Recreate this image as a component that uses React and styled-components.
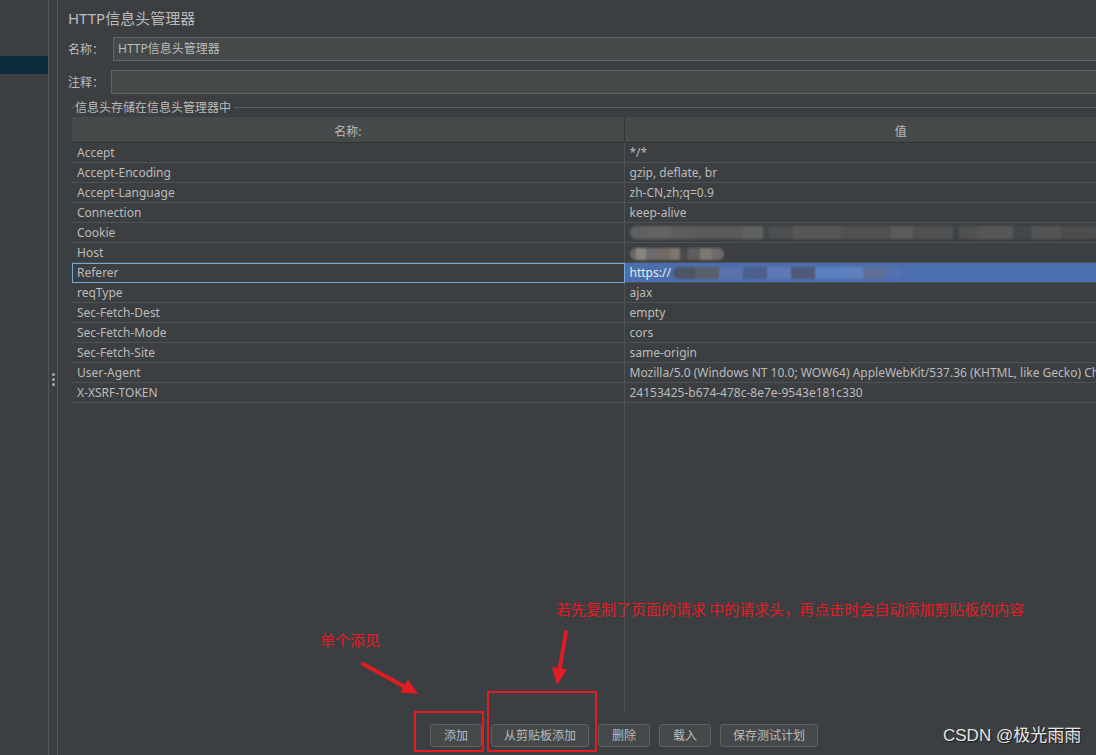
import styled, { createGlobalStyle } from 'styled-components';

const GlobalStyle = createGlobalStyle`
    html, body {
        margin: 0;
        padding: 0;
        background: #3c3f41;
        overflow: hidden;
    }
    body {
        font-family: "Noto Sans", "Noto Sans CJK SC", sans-serif;
        color: #bbbbbb;
    }
`;

const headers = [
    ['Accept', '*/*'],
    ['Accept-Encoding', 'gzip, deflate, br'],
    ['Accept-Language', 'zh-CN,zh;q=0.9'],
    ['Connection', 'keep-alive'],
    ['Cookie', null, 'cookie'],
    ['Host', null, 'host'],
    ['Referer', 'https://', 'referer'],
    ['reqType', 'ajax'],
    ['Sec-Fetch-Dest', 'empty'],
    ['Sec-Fetch-Mode', 'cors'],
    ['Sec-Fetch-Site', 'same-origin'],
    ['User-Agent', 'Mozilla/5.0 (Windows NT 10.0; WOW64) AppleWebKit/537.36 (KHTML, like Gecko) Chrome/86.0.4240.198 Safari/537.36'],
    ['X-XSRF-TOKEN', '24153425-b674-478c-8e7e-9543e181c330'],
];

// blurred blocks that hide the private values
const mosaics = {
    cookie: [
        [17, '#5d5f61'], [24, '#626364'], [24, '#5c5d5e'], [48, '#5a5a5b'], [20, '#606162'],
        [6, '#45484a'], [24, '#4c4e50'], [48, '#565758'], [50, '#4f5152'], [22, '#5a5b5c'],
        [40, '#4f5152'], [6, '#3e4143'], [18, '#4e5051'], [36, '#555657'], [18, '#44474a'],
        [30, '#545556'], [40, '#4b4d4f'],
    ],
    host: [
        [6, '#6a6a6a'], [10, '#8a8580'], [12, '#6b6a70'], [12, '#726a62'], [10, '#7b7670'],
        [8, '#4a4a4a'], [12, '#5f5d62'], [12, '#7d7872'], [12, '#6f6b6a'],
    ],
    referer: [
        [22, '#4d5464'], [24, '#5a5f6c'], [24, '#5a73ad'], [24, '#4b5f8f'], [24, '#5d78b5'],
        [24, '#4e5a78'], [24, '#5a7ec0'], [24, '#5e80bd'], [22, '#5f6f95'], [18, '#5472b0'],
    ],
};

function HeaderRow({ name, value, kind }) {
    const selected = kind === 'referer';
    return (
        <Row>
            <NameCell $selected={selected}>{name}</NameCell>
            <ValueCell $selected={selected}>
                {value && <span>{value}</span>}
                {kind && (
                    <Mosaic $kind={kind}>
                        {mosaics[kind].map(([w, c], i) => (
                            <Block key={i} $w={w} $c={c} />
                        ))}
                    </Mosaic>
                )}
            </ValueCell>
        </Row>
    );
}

export default function App() {
    return (
        <>
            <GlobalStyle />
            <Frame>
                <Sidebar>
                    <TreeItem />
                    <TreeItem $selected />
                </Sidebar>
                <Splitter>
                    <Grip>
                        <Dot />
                        <Dot />
                        <Dot />
                    </Grip>
                </Splitter>
                <Main>
                    <Title>HTTP信息头管理器</Title>
                    <FieldRow>
                        <Label>名称：</Label>
                        <TextInput>HTTP信息头管理器</TextInput>
                    </FieldRow>
                    <FieldRow>
                        <Label>注释：</Label>
                        <TextInput $tight />
                    </FieldRow>
                    <Group>
                        <Legend>信息头存储在信息头管理器中</Legend>
                        <Table>
                            <HeadRow>
                                <HeadCell>名称:</HeadCell>
                                <HeadCell>值</HeadCell>
                            </HeadRow>
                            {headers.map(([name, value, kind]) => (
                                <HeaderRow key={name} name={name} value={value} kind={kind} />
                            ))}
                            <Filler>
                                <FillCell />
                                <FillCell />
                            </Filler>
                        </Table>
                    </Group>
                    <ButtonBar>
                        <Button>添加</Button>
                        <Button>从剪贴板添加</Button>
                        <Button>删除</Button>
                        <Button>载入</Button>
                        <Button>保存测试计划</Button>
                    </ButtonBar>
                </Main>
            </Frame>

            <Note $x={320} $y={630}>单个添见</Note>
            <Note $x={556} $y={599}>若先复制了页面的请求 中的请求头，再点击时会自动添加剪贴板的内容</Note>
            <Marks width="1096" height="755" viewBox="0 0 1096 755">
                <g stroke="#e21c24" fill="none">
                    <line x1="363" y1="664" x2="405" y2="687" strokeWidth="4" strokeLinecap="round" />
                    <line x1="566" y1="632" x2="559.5" y2="670" strokeWidth="4" strokeLinecap="round" />
                    <rect x="415" y="712" width="68" height="39" strokeWidth="2" />
                    <rect x="488" y="692" width="108" height="59" strokeWidth="2" />
                </g>
                <g fill="#e21c24">
                    <polygon points="418,694 400,692.5 408,679.5" />
                    <polygon points="557,685 552,667 567,669.5" />
                </g>
            </Marks>
            <Watermark>CSDN @极光雨雨</Watermark>
        </>
    );
}

const Frame = styled.div`
    display: flex;
    width: 1200px;
    height: 755px;
    background: #3c3f41;
`;

const Sidebar = styled.div`
    width: 48px;
    flex: none;
    padding-top: 38px;
    border-right: 1px solid #555759;
    display: flex;
    flex-direction: column;
`;

const TreeItem = styled.div`
    height: 18px;
    background: ${p => (p.$selected ? '#0d293e' : 'transparent')};
`;

const Splitter = styled.div`
    width: 8px;
    flex: none;
    border-right: 1px solid #555759;
    display: flex;
    align-items: center;
    justify-content: center;
`;

const Grip = styled.div`
    display: flex;
    flex-direction: column;
    gap: 2px;
    margin-top: 3px;
`;

const Dot = styled.span`
    width: 3px;
    height: 3px;
    border-radius: 50%;
    background: #a9abad;
`;

const Main = styled.div`
    width: 1109px;
    flex: none;
    padding: 0 10px;
    display: flex;
    flex-direction: column;
    font-size: 12px;
`;

const Title = styled.div`
    margin-top: 8px;
    height: 20px;
    line-height: 20px;
    font-size: 15px;
    color: #bbbbbb;
`;

const FieldRow = styled.div`
    display: flex;
    align-items: center;
    margin-top: 9px;
    height: 24px;
`;

const Label = styled.span`
    font-size: 12px;
    color: #bbbbbb;
`;

const TextInput = styled.div`
    flex: 1;
    height: 22px;
    margin-left: ${p => (p.$tight ? '7px' : '9px')};
    margin-right: -20px;
    padding-left: 4px;
    background: #45494a;
    border: 1px solid #646464;
    line-height: 22px;
    font-size: 12px;
    color: #bbbbbb;
`;

const Group = styled.div`
    flex: 1;
    display: flex;
    flex-direction: column;
    margin-left: 3px;
    margin-top: 6px;
    min-height: 0;
`;

const Legend = styled.div`
    display: flex;
    align-items: center;
    height: 16px;
    line-height: 16px;
    font-size: 12px;
    color: #bbbbbb;

    &::before,
    &::after {
        content: '';
        border-top: 1px solid #5b5e60;
        margin-top: -1px;
    }
    &::before {
        width: 3px;
        margin-right: 1px;
    }
    &::after {
        flex: 1;
        margin-left: 3px;
    }
`;

const Table = styled.div`
    flex: 1;
    display: flex;
    flex-direction: column;
    margin: 1px 0 0 1px;
`;

const HeadRow = styled.div`
    display: grid;
    grid-template-columns: 1fr 1fr;
    height: 25px;
    background: #45494a;
    border-bottom: 1px solid #323436;
`;

const HeadCell = styled.div`
    display: flex;
    align-items: center;
    justify-content: center;
    font-size: 12px;
    color: #bbbbbb;
    padding-top: 2px;

    &:first-child {
        border-right: 1px solid #323436;
    }
`;

const Row = styled.div`
    display: grid;
    grid-template-columns: 1fr 1fr;
    height: 20px;
    border-bottom: 1px solid #4f5254;
    box-sizing: border-box;
`;

const NameCell = styled.div`
    box-sizing: border-box;
    height: 20px;
    margin-bottom: -1px;
    white-space: nowrap;
    font-size: 12px;
    color: #bbbbbb;
    border: ${p => (p.$selected ? '1px solid #75a9d6' : 'none')};
    border-right: ${p => (p.$selected ? '1px solid #75a9d6' : '1px solid #4f5254')};
    padding-left: ${p => (p.$selected ? '4px' : '5px')};
    line-height: ${p => (p.$selected ? '17px' : '19px')};
`;

const ValueCell = styled.div`
    display: flex;
    align-items: center;
    padding-left: 5px;
    overflow: hidden;
    white-space: nowrap;
    font-size: 12px;
    color: ${p => (p.$selected ? '#e8e8e8' : '#bbbbbb')};
    background: ${p => (p.$selected ? '#4b6eaf' : 'transparent')};
    height: 19px;
`;

const Mosaic = styled.span`
    display: flex;
    height: ${p => (p.$kind === 'cookie' ? '13px' : '12px')};
    margin-top: ${p => (p.$kind === 'host' ? '2px' : '0')};
    margin-left: ${p => (p.$kind === 'referer' ? '2px' : '0')};
    filter: blur(1.2px);
    border-radius: 6px;
    overflow: hidden;
`;

const Block = styled.span`
    flex: none;
    width: ${p => p.$w}px;
    background: ${p => p.$c};
`;

const Filler = styled.div`
    flex: 1;
    display: grid;
    grid-template-columns: 1fr 1fr;
`;

const FillCell = styled.div`
    &:first-child {
        border-right: 1px solid #4f5254;
    }
`;

const ButtonBar = styled.div`
    height: 44px;
    flex: none;
    display: flex;
    justify-content: center;
    align-items: flex-start;
    gap: 9px;
    padding-top: 13px;
    box-sizing: border-box;
    margin-left: 3px;
`;

const Button = styled.div`
    height: 21px;
    line-height: 21px;
    padding: 0 12px;
    min-width: 26px;
    text-align: center;
    background: #45494a;
    border: 1px solid #5e6164;
    border-radius: 3px;
    font-size: 12px;
    color: #bbbbbb;
`;

const Note = styled.div`
    position: absolute;
    left: ${p => p.$x}px;
    top: ${p => p.$y}px;
    font-size: 15px;
    line-height: 20px;
    color: #e21c24;
    font-family: "Noto Sans CJK SC", sans-serif;
    white-space: nowrap;
`;

const Marks = styled.svg`
    position: absolute;
    left: 0;
    top: 0;
    pointer-events: none;
`;

const Watermark = styled.div`
    position: absolute;
    left: 943px;
    top: 724px;
    font-size: 17px;
    line-height: 24px;
    color: #e4e4e4;
    text-shadow: 1px 1px 1px #1a1a1a;
    font-family: "Liberation Sans", "Noto Sans CJK SC", sans-serif;
    white-space: nowrap;
`;
